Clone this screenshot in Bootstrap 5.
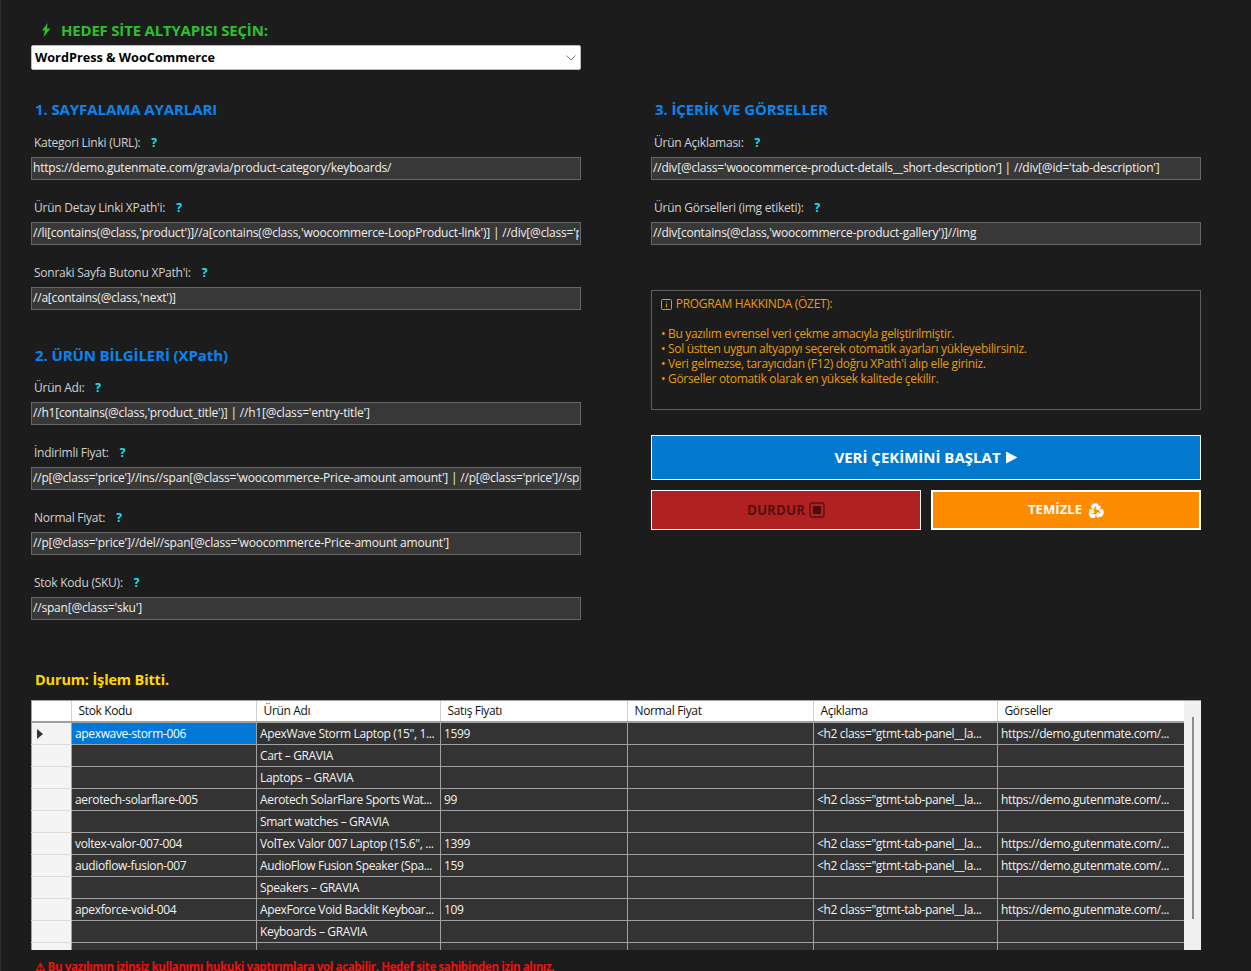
<!DOCTYPE html>
<html lang="en">
<head>
  <meta charset="UTF-8" />
  <title>Veri Çekme</title>
  <link href="https://cdn.jsdelivr.net/npm/bootstrap@5.3.0/dist/css/bootstrap.min.css" rel="stylesheet">
  <style>
    html, body { height: 971px; overflow: hidden; }
    body { background: #1c1c1c; color: #e6e6e6; font-family: "Open Sans", "Noto Sans", sans-serif; font-size: 12px; letter-spacing: -.35px; border-left: 1px solid #2e2e2e; }
    .page-wrap { padding: 20px 50px 0 30px; width: 1251px; }
    .target-title { color: #2fbf2f; font-size: 15px; font-weight: 700; line-height: 20px; margin: 0 0 5px 10px; gap: 10px; letter-spacing: -.2px; }
    .target-select { width: 550px; height: 25px; padding: 1px 24px 0 3px; border-radius: 2px; border: 1px solid #bbb; font-size: 12.7px; font-weight: 700; color: #000; font-family: inherit; background-image: url("data:image/svg+xml,%3csvg xmlns='http://www.w3.org/2000/svg' viewBox='0 0 10 6'%3e%3cpath fill='none' stroke='%23777' d='M.5.5 5 5 9.500.5'/%3e%3c/svg%3e"); background-size: 10px 6px; background-position: right 4px center; letter-spacing: 0; }
    .cols { gap: 70px; margin-top: 28px; }
    .form-col { width: 550px; }
    .sec-title { color: #0a84f0; font-size: 15px; font-weight: 700; line-height: 22px; margin: 0 0 13px 4px; letter-spacing: -.1px; }
    .field-label { height: 24px; line-height: 20px; margin: 0 0 0 3px; color: #d2d2d2; gap: 11px; letter-spacing: -.25px; }
    .field-label b { color: #19e3f0; font-size: 12px; }
    .field-input { height: 23px; padding: 0 1px 2px 1px; background: #383838; border: 1px solid #676767; border-radius: 0; color: #f0f0f0; font-size: 12px; letter-spacing: -.2px; font-family: inherit; margin-bottom: 18px; }
    .field-input:focus { background: #383838; color: #f0f0f0; border-color: #676767; box-shadow: none; }
    .sec-two { margin-top: 34px; margin-bottom: 12px; }
    .info-box { height: 120px; margin-top: 45px; padding: 5px 9px; border: 1px solid #5e5e5e; color: #e79b0c; line-height: 15px; letter-spacing: -.32px; }
    .info-box p { margin: 0 0 15px; }
    .info-ic { vertical-align: -2px; margin-right: 1px; }
    .act-btn { border-radius: 0; font-weight: 700; border: 1px solid #fff; color: #fff; }
    .act-btn:hover { color: #fff; }
    .btn-start { width: 100%; height: 45px; margin-top: 25px; background: #0079ce; font-size: 15px; letter-spacing: 0; }
    .btn-start:hover { background: #0079ce; }
    .btn-row { gap: 10px; margin-top: 10px; }
    .btn-stop { height: 40px; width: 270px; flex: none; background: #b02222; color: #5a0f0f; font-size: 13.5px; letter-spacing: 0; }
    .btn-stop:hover { background: #b02222; color: #5a0f0f; }
    .btn-clean { height: 40px; width: 270px; flex: none; background: #ff8c00; border-width: 2px; font-size: 13px; letter-spacing: .1px; gap: 6px; }
    .btn-clean:hover { background: #ff8c00; }
    .status-line { color: #ffd700; font-size: 14.5px; font-weight: 700; line-height: 20px; margin: 32px 0 10px 4px; letter-spacing: -.15px; }
    .grid-wrap { width: 1170px; height: 250px; overflow: hidden; background: #f0f0f0; border-top: 1px solid #a0a0a0; }
    .grid-main { width: 1153px; overflow: hidden; }
    .data-grid { table-layout: fixed; width: 1153px; margin: 0; border-collapse: collapse; }
    .data-grid th, .data-grid td { height: 22px; padding: 1px 3px 1px 3.5px; line-height: 19px; white-space: nowrap; overflow: hidden; font-weight: 400; font-size: 12px; border: 0; border-right: 1px solid #a0a0a0; border-bottom: 1px solid #a0a0a0; box-shadow: none; }
    .data-grid thead th { height: 21px; background: #fff; color: #111; padding: 0 3px 1px 7px; border-right-color: #d0d0d0; border-bottom: 2px solid #a0a0a0; }
    .data-grid tbody td { background: #333; color: #f2f2f2; }
    .data-grid tbody .row-head { background: #f4f4f4; border-right: 1px solid #a0a0a0; border-bottom-color: #dcdcdc; padding: 0 0 0 6px; box-shadow: inset 1px 0 #a0a0a0; }
    .data-grid thead th:first-child { box-shadow: inset 1px 0 #a0a0a0; }
    .data-grid tbody td.cur-cell { background: #0078d7; color: #fff; }
    .grid-scroll { flex: 1; padding: 16px 0 0 8px; }
    .grid-thumb { width: 2px; height: 202px; background: #8c8c8c; }
    .legal-note { color: #f01010; font-size: 11.5px; font-weight: 700; line-height: 16px; margin: 9px 0 0 4px; letter-spacing: -.35px; }
    .warn-ic { font-family: "DejaVu Sans", sans-serif; -webkit-text-stroke: .4px #f01010; }
  </style>
</head>
<body>
  <div class="page-wrap">
    <div class="target-title d-flex align-items-center">
      <svg width="10" height="14" viewBox="0 0 10 14"><path fill="#2fbf2f" d="M6.500 0 1 7.500h3L2.500 14l7-8.500H6z"/></svg>
      <span>HEDEF SİTE ALTYAPISI SEÇİN:</span>
    </div>
    <select class="form-select target-select"><option>WordPress &amp; WooCommerce</option></select>

    <div class="cols d-flex">
      <div class="form-col">
        <h2 class="sec-title">1. SAYFALAMA AYARLARI</h2>
        <div class="field-label d-flex"><span>Kategori Linki (URL):</span><b>?</b></div>
        <input class="form-control field-input" value="https://demo.gutenmate.com/gravia/product-category/keyboards/">
        <div class="field-label d-flex"><span>Ürün Detay Linki XPath'i:</span><b>?</b></div>
        <input class="form-control field-input" value="//li[contains(@class,'product')]//a[contains(@class,'woocommerce-LoopProduct-link')] | //div[@class='product-title']//a">
        <div class="field-label d-flex"><span>Sonraki Sayfa Butonu XPath'i:</span><b>?</b></div>
        <input class="form-control field-input" value="//a[contains(@class,'next')]">

        <h2 class="sec-title sec-two">2. ÜRÜN BİLGİLERİ (XPath)</h2>
        <div class="field-label d-flex"><span>Ürün Adı:</span><b>?</b></div>
        <input class="form-control field-input" value="//h1[contains(@class,'product_title')] | //h1[@class='entry-title']">
        <div class="field-label d-flex"><span>İndirimli Fiyat:</span><b>?</b></div>
        <input class="form-control field-input" value="//p[@class='price']//ins//span[@class='woocommerce-Price-amount amount'] | //p[@class='price']//span[@class='amount']">
        <div class="field-label d-flex"><span>Normal Fiyat:</span><b>?</b></div>
        <input class="form-control field-input" value="//p[@class='price']//del//span[@class='woocommerce-Price-amount amount']">
        <div class="field-label d-flex"><span>Stok Kodu (SKU):</span><b>?</b></div>
        <input class="form-control field-input" value="//span[@class='sku']">
      </div>

      <div class="form-col">
        <h2 class="sec-title">3. İÇERİK VE GÖRSELLER</h2>
        <div class="field-label d-flex"><span>Ürün Açıklaması:</span><b>?</b></div>
        <input class="form-control field-input" value="//div[@class='woocommerce-product-details__short-description'] | //div[@id='tab-description']">
        <div class="field-label d-flex"><span>Ürün Görselleri (img etiketi):</span><b>?</b></div>
        <input class="form-control field-input" value="//div[contains(@class,'woocommerce-product-gallery')]//img">

        <div class="info-box">
          <p><svg class="info-ic" width="11" height="11" viewBox="0 0 11 11"><rect x=".5" y=".5" width="10" height="10" rx="1" fill="none" stroke="#e79b0c"/><path d="M5.500 2.500v1M5.500 4.500v4" stroke="#e79b0c" fill="none"/></svg> PROGRAM HAKKINDA (ÖZET):</p>
          <div>• Bu yazılım evrensel veri çekme amacıyla geliştirilmiştir.</div>
          <div>• Sol üstten uygun altyapıyı seçerek otomatik ayarları yükleyebilirsiniz.</div>
          <div>• Veri gelmezse, tarayıcıdan (F12) doğru XPath'i alıp elle giriniz.</div>
          <div>• Görseller otomatik olarak en yüksek kalitede çekilir.</div>
        </div>

        <button class="btn act-btn btn-start d-flex align-items-center justify-content-center gap-1">VERİ ÇEKİMİNİ BAŞLAT
          <svg width="13" height="13" viewBox="0 0 12 12"><path fill="#fff" d="M1 .500 11.500 6 1 11.500z"/></svg>
        </button>
        <div class="btn-row d-flex">
          <button class="btn act-btn btn-stop d-flex align-items-center justify-content-center gap-1">DURDUR
            <svg width="16" height="16" viewBox="0 0 16 16"><rect x="1" y="1" width="14" height="14" rx="2" fill="none" stroke="#5a0f0f" stroke-width="1.300"/><rect x="4" y="4" width="8" height="8" fill="#4a0c0c"/></svg>
          </button>
          <button class="btn act-btn btn-clean d-flex align-items-center justify-content-center">TEMİZLE
            <svg width="16" height="15" viewBox="0 0 16 15"><g fill="#fff" stroke="#fff" stroke-width=".7"><path id="rc" d="M5.300.8h4.200l1.700 2.900 1.300-.7-.9 3.900-3.900-1 1.300-.7L7.500 2.600 5.700 5.700 2.900 4z"/><use href="#rc" transform="rotate(120 8 8.300)"/><use href="#rc" transform="rotate(240 8 8.300)"/></g></svg>
          </button>
        </div>
      </div>
    </div>

    <div class="status-line">Durum: İşlem Bitti.</div>

    <div class="grid-wrap d-flex">
      <div class="grid-main">
        <table class="table data-grid">
          <colgroup><col style="width:40px"><col style="width:185px"><col style="width:184px"><col style="width:187px"><col style="width:186px"><col style="width:184px"><col style="width:187px"></colgroup>
          <thead>
            <tr><th></th><th>Stok Kodu</th><th>Ürün Adı</th><th>Satış Fiyatı</th><th>Normal Fiyat</th><th>Açıklama</th><th>Görseller</th></tr>
          </thead>
          <tbody>
            <tr><td class="row-head"><svg width="6" height="10" viewBox="0 0 6 10"><path fill="#333" d="M0 0 6 5 0 10z"/></svg></td><td class="cur-cell">apexwave-storm-006</td><td>ApexWave Storm Laptop (15", 1...</td><td>1599</td><td></td><td>&lt;h2 class="gtmt-tab-panel__la...</td><td>https://demo.gutenmate.com/...</td></tr>
            <tr><td class="row-head"></td><td></td><td>Cart – GRAVIA</td><td></td><td></td><td></td><td></td></tr>
            <tr><td class="row-head"></td><td></td><td>Laptops – GRAVIA</td><td></td><td></td><td></td><td></td></tr>
            <tr><td class="row-head"></td><td>aerotech-solarflare-005</td><td>Aerotech SolarFlare Sports Wat...</td><td>99</td><td></td><td>&lt;h2 class="gtmt-tab-panel__la...</td><td>https://demo.gutenmate.com/...</td></tr>
            <tr><td class="row-head"></td><td></td><td>Smart watches – GRAVIA</td><td></td><td></td><td></td><td></td></tr>
            <tr><td class="row-head"></td><td>voltex-valor-007-004</td><td>VolTex Valor 007 Laptop (15.6", ...</td><td>1399</td><td></td><td>&lt;h2 class="gtmt-tab-panel__la...</td><td>https://demo.gutenmate.com/...</td></tr>
            <tr><td class="row-head"></td><td>audioflow-fusion-007</td><td>AudioFlow Fusion Speaker (Spa...</td><td>159</td><td></td><td>&lt;h2 class="gtmt-tab-panel__la...</td><td>https://demo.gutenmate.com/...</td></tr>
            <tr><td class="row-head"></td><td></td><td>Speakers – GRAVIA</td><td></td><td></td><td></td><td></td></tr>
            <tr><td class="row-head"></td><td>apexforce-void-004</td><td>ApexForce Void Backlit Keyboar...</td><td>109</td><td></td><td>&lt;h2 class="gtmt-tab-panel__la...</td><td>https://demo.gutenmate.com/...</td></tr>
            <tr><td class="row-head"></td><td></td><td>Keyboards – GRAVIA</td><td></td><td></td><td></td><td></td></tr>
            <tr><td class="row-head"></td><td></td><td></td><td></td><td></td><td></td><td></td></tr>
          </tbody>
        </table>
      </div>
      <div class="grid-scroll"><div class="grid-thumb"></div></div>
    </div>

    <div class="legal-note"><span class="warn-ic">⚠</span> Bu yazılımın izinsiz kullanımı hukuki yaptırımlara yol açabilir. Hedef site sahibinden izin alınız.</div>
  </div>
  <script src="https://cdn.jsdelivr.net/npm/bootstrap@5.3.0/dist/js/bootstrap.bundle.min.js"></script>
</body>
</html>
